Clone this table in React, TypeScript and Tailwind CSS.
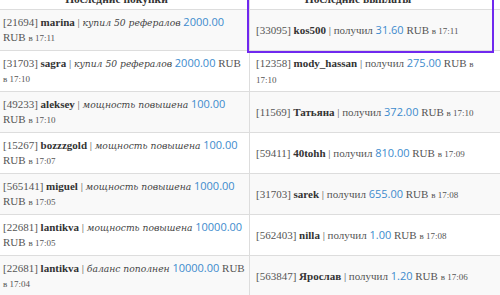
import React from "react";

type Row = { id: string; name: string; action: string; amount: string; time: string };

const left: Row[] = [
  { id: "21694", name: "marina", action: "купил 50 рефералов", amount: "2000.00", time: "17:11" },
  { id: "31703", name: "sagra", action: "купил 50 рефералов", amount: "2000.00", time: "17:10" },
  { id: "49233", name: "aleksey", action: "мощность повышена", amount: "100.00", time: "17:10" },
  { id: "15267", name: "bozzzgold", action: "мощность повышена", amount: "100.00", time: "17:07" },
  { id: "565141", name: "miguel", action: "мощность повышена", amount: "1000.00", time: "17:05" },
  { id: "22681", name: "lantikva", action: "мощность повышена", amount: "10000.00", time: "17:05" },
  { id: "22681", name: "lantikva", action: "баланс пополнен", amount: "10000.00", time: "17:04" },
];

const right: Row[] = [
  { id: "33095", name: "kos500", action: "получил", amount: "31.60", time: "17:11" },
  { id: "12358", name: "mody_hassan", action: "получил", amount: "275.00", time: "17:10" },
  { id: "11569", name: "Татьяна", action: "получил", amount: "372.00", time: "17:10" },
  { id: "59411", name: "40tohh", action: "получил", amount: "810.00", time: "17:09" },
  { id: "31703", name: "sarek", action: "получил", amount: "655.00", time: "17:08" },
  { id: "562403", name: "nilla", action: "получил", amount: "1.00", time: "17:08" },
  { id: "563847", name: "Ярослав", action: "получил", amount: "1.20", time: "17:06" },
];

function Entry({ r, italic }: { r: Row; italic: boolean }) {
  return (
    <div className="leading-[15px] text-[11px] text-[#555]">
      [{r.id}] <b className="font-bold text-[#333]">{r.name}</b> |{" "}
      {italic ? (
        <i className="italic text-[9.2px] text-[#444] [font-family:'DejaVu_Serif',serif]">{r.action}</i>
      ) : (
        <span className="text-[#555]">{r.action}</span>
      )}{" "}
      <span className="text-[11px] text-[#3d8bcd] [font-family:'Open_Sans',sans-serif]">{r.amount}</span> RUB{" "}
      <span className="text-[9px]">в {r.time}</span>
    </div>
  );
}

export default function App() {
  return (
    <div className="relative w-[500px] h-[295px] overflow-hidden bg-white [font-family:'Liberation_Serif',serif]">
      <div className="grid grid-cols-[250px_250px]">
        <div className="h-[10px] border-b border-r border-[#ddd] overflow-hidden">
          <div className="mt-[-8px] pr-[16px] text-center text-[11.5px] font-bold leading-[15px] text-[#333]">
            Последние покупки
          </div>
        </div>
        <div className="h-[10px] border-b border-[#ddd] overflow-hidden">
          <div className="mt-[-8px] pr-[34px] text-center text-[11.5px] font-bold leading-[15px] text-[#333]">
            Последние выплаты
          </div>
        </div>
        {left.map((l, i) => {
          const r = right[i];
          const bg = i % 2 === 0 ? "bg-[#f9f9f9]" : "bg-white";
          return (
            <React.Fragment key={i}>
              <div className={`h-[41px] border-b border-r border-[#ddd] flex items-center pl-[3px] pr-[4px] ${bg}`}>
                <Entry r={l} italic />
              </div>
              <div className={`h-[41px] border-b border-[#ddd] flex items-center pl-[6px] pr-[8px] ${bg}`}>
                <Entry r={r} italic={false} />
              </div>
            </React.Fragment>
          );
        })}
      </div>
      <div className="absolute left-[247px] top-[-10px] w-[247px] h-[63px] border-2 border-[#7028ef]" />
    </div>
  );
}
